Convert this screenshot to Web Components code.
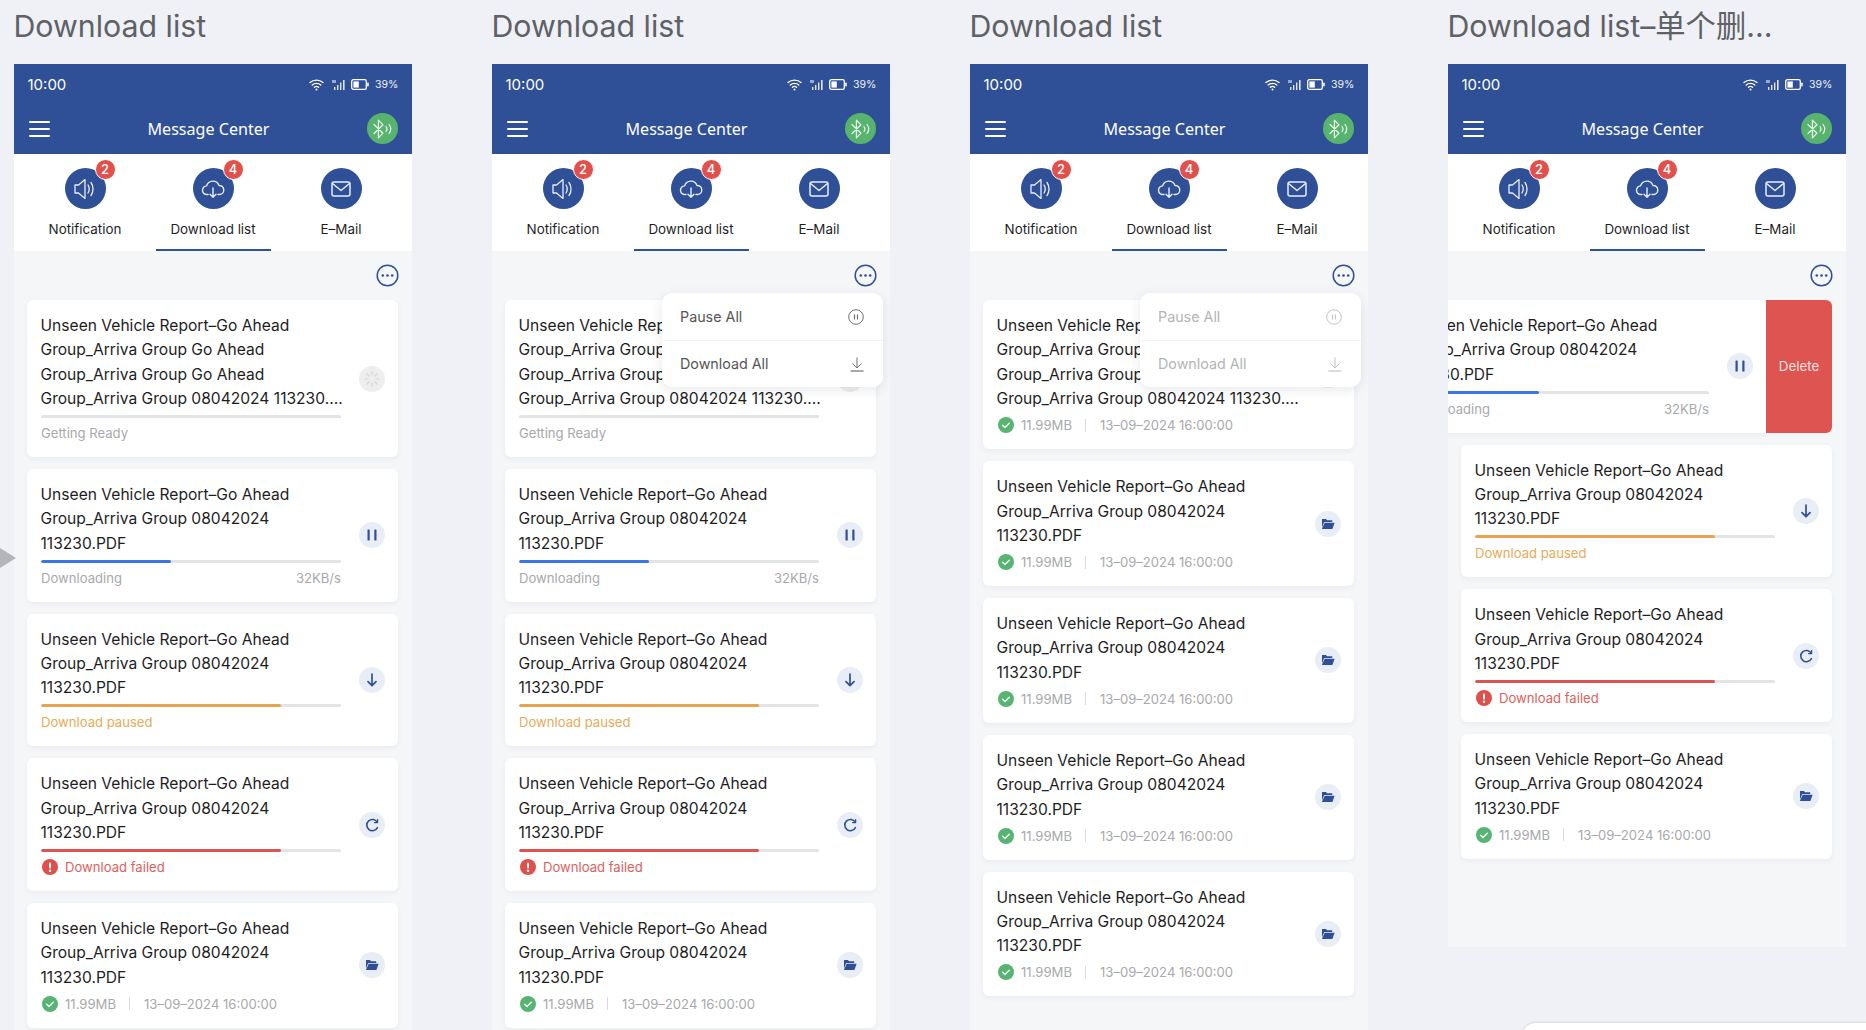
<!DOCTYPE html>
<html lang="en"><head><meta charset="utf-8"><title>Download list</title>
<style>
html,body{margin:0;height:100%;overflow:hidden;background:#eff1f6}
body{font-family:Inter,"Noto Sans CJK SC",sans-serif;}
</style></head><body>
<dl-board>
  <dl-column heading="Download list">
    <dl-phone>
      <dl-card icon="spin" state="ready">Unseen Vehicle Report–Go Ahead<br>Group_Arriva Group Go Ahead<br>Group_Arriva Group Go Ahead<br>Group_Arriva Group 08042024 113230....</dl-card>
      <dl-card icon="pause" state="loading">Unseen Vehicle Report–Go Ahead<br>Group_Arriva Group 08042024<br>113230.PDF</dl-card>
      <dl-card icon="down" state="paused">Unseen Vehicle Report–Go Ahead<br>Group_Arriva Group 08042024<br>113230.PDF</dl-card>
      <dl-card icon="retry" state="failed">Unseen Vehicle Report–Go Ahead<br>Group_Arriva Group 08042024<br>113230.PDF</dl-card>
      <dl-card icon="folder" state="done">Unseen Vehicle Report–Go Ahead<br>Group_Arriva Group 08042024<br>113230.PDF</dl-card>
    </dl-phone>
  </dl-column>
  <dl-column heading="Download list">
    <dl-phone>
      <dl-menu slot="overlay"></dl-menu>
      <dl-card icon="spin" state="ready">Unseen Vehicle Report–Go Ahead<br>Group_Arriva Group Go Ahead<br>Group_Arriva Group Go Ahead<br>Group_Arriva Group 08042024 113230....</dl-card>
      <dl-card icon="pause" state="loading">Unseen Vehicle Report–Go Ahead<br>Group_Arriva Group 08042024<br>113230.PDF</dl-card>
      <dl-card icon="down" state="paused">Unseen Vehicle Report–Go Ahead<br>Group_Arriva Group 08042024<br>113230.PDF</dl-card>
      <dl-card icon="retry" state="failed">Unseen Vehicle Report–Go Ahead<br>Group_Arriva Group 08042024<br>113230.PDF</dl-card>
      <dl-card icon="folder" state="done">Unseen Vehicle Report–Go Ahead<br>Group_Arriva Group 08042024<br>113230.PDF</dl-card>
    </dl-phone>
  </dl-column>
  <dl-column heading="Download list">
    <dl-phone>
      <dl-menu slot="overlay" disabled></dl-menu>
      <dl-card icon="folder" state="done">Unseen Vehicle Report–Go Ahead<br>Group_Arriva Group Go Ahead<br>Group_Arriva Group Go Ahead<br>Group_Arriva Group 08042024 113230....</dl-card>
      <dl-card icon="folder" state="done">Unseen Vehicle Report–Go Ahead<br>Group_Arriva Group 08042024<br>113230.PDF</dl-card>
      <dl-card icon="folder" state="done">Unseen Vehicle Report–Go Ahead<br>Group_Arriva Group 08042024<br>113230.PDF</dl-card>
      <dl-card icon="folder" state="done">Unseen Vehicle Report–Go Ahead<br>Group_Arriva Group 08042024<br>113230.PDF</dl-card>
      <dl-card icon="folder" state="done">Unseen Vehicle Report–Go Ahead<br>Group_Arriva Group 08042024<br>113230.PDF</dl-card>
    </dl-phone>
  </dl-column>
  <dl-column heading="Download list–单个删...">
    <dl-phone short>
      <dl-swipe><dl-card icon="pause" state="loading">Unseen Vehicle Report–Go Ahead<br>Group_Arriva Group 08042024<br>113230.PDF</dl-card></dl-swipe>
      <dl-card icon="down" state="paused">Unseen Vehicle Report–Go Ahead<br>Group_Arriva Group 08042024<br>113230.PDF</dl-card>
      <dl-card icon="retry" state="failed">Unseen Vehicle Report–Go Ahead<br>Group_Arriva Group 08042024<br>113230.PDF</dl-card>
      <dl-card icon="folder" state="done">Unseen Vehicle Report–Go Ahead<br>Group_Arriva Group 08042024<br>113230.PDF</dl-card>
    </dl-phone>
  </dl-column>
</dl-board>
<script>
const BLUE='#2f5096';
const ICONS={
 spin:`<svg width="16" height="16" viewBox="0 0 16 16" fill="none" stroke="#d4d4d4" stroke-width="1.2" stroke-linecap="round"><path d="M8 1v3M8 12v3M1 8h3M12 8h3M3 3l2 2M11 11l2 2M3 13l2-2M11 5l2-2"/></svg>`,
 pause:`<svg width="12" height="12" viewBox="0 0 12 12" fill="${BLUE}"><rect x="1.5" y="0.5" width="2.2" height="11" rx=".6"/><rect x="8.3" y="0.5" width="2.2" height="11" rx=".6"/></svg>`,
 down:`<svg width="14" height="14" viewBox="0 0 14 14" fill="none" stroke="${BLUE}" stroke-width="1.7" stroke-linecap="round" stroke-linejoin="round"><path d="M7 1v11.4M3 8.6l4 4 4-4"/></svg>`,
 retry:`<svg width="14" height="14" viewBox="0 0 14 14" fill="none" stroke="${BLUE}" stroke-width="1.6" stroke-linecap="round"><path d="M12.2 4.2A5.6 5.6 0 1 0 12.4 9.6"/><path d="M12.6 1.6v3h-3" stroke-width="1.3" stroke-linejoin="round"/></svg>`,
 folder:`<svg width="14" height="12" viewBox="0 0 14 12" fill="${BLUE}"><path d="M1 1h4l1 1.3h5.2V4H3.2L1 9.5z"/><path d="M3.7 4.8H13.6L11.4 11H.9z"/></svg>`
};
function def(name,css,html,init){
  customElements.define(name,class extends HTMLElement{
    constructor(){super();this.attachShadow({mode:'open'});}
    connectedCallback(){
      this.shadowRoot.innerHTML=`<style>${css}</style>`+(typeof html==='function'?html(this):html);
      if(init)init(this);
    }
  });
}
def('dl-board',`:host{display:flex;gap:80px;padding-left:14px;height:1030px;overflow:hidden;position:relative;box-sizing:border-box}
 .arrow{position:absolute;left:0;top:548px;width:0;height:0;border-left:16px solid #b3b5b9;border-top:10px solid transparent;border-bottom:10px solid transparent;z-index:3}
 .sheet{position:absolute;left:1522px;top:1023px;width:344px;height:20px;background:#fff;border-radius:14px 0 0 0;box-shadow:0 -1px 2px rgba(0,0,0,.1)}`,
 `<slot></slot><div class="arrow"></div><div class="sheet"></div>`);
def('dl-column',`:host{display:flex;flex-direction:column;flex:0 0 398px;width:398px;min-width:0}
 h1{margin:0 0 0 -.5px;height:63.5px;font:400 30.3px/52px Inter,"Noto Sans CJK SC",sans-serif;color:#5e6165;white-space:nowrap;flex:none}`,
 h=>`<h1>${h.getAttribute('heading')}</h1><slot></slot>`);
def('dl-phone',`:host{display:block;position:relative;overflow:hidden;background:#f5f6f8;flex:none}
 :host(:not([short])){height:1000px}
 :host([short]){height:883.5px}
 .list{display:flex;flex-direction:column;gap:12px;padding:0 14px 0 13px}`,
 `<dl-statusbar></dl-statusbar><dl-nav></dl-nav><dl-tabs></dl-tabs><dl-tools></dl-tools><div class="list"><slot></slot></div><slot name="overlay"></slot>`);
def('dl-statusbar',`:host{display:flex;align-items:center;height:41.5px;padding:1px 15px 0 13.5px;background:${BLUE};color:#fff;box-sizing:border-box}
 .t{font:400 15px/1 Inter,sans-serif;flex:1}
 svg{display:block}
 .p{font:400 10.5px/1 Inter,sans-serif;margin-left:6px;color:#eef1f8;width:22px;white-space:nowrap}`,
 `<span class="t">10:00</span>
 <svg width="15" height="12" viewBox="0 0 15 12" fill="none" stroke="#fff" stroke-width="1.3" stroke-linecap="round"><path d="M1 3.6C4.6.4 10.4.4 14 3.6M3.2 6C5.6 3.9 9.4 3.9 11.8 6M5.4 8.3c1.2-1 3-1 4.2 0"/><circle cx="7.5" cy="10.6" r="1" fill="#fff" stroke="none"/></svg>
 <svg style="margin-left:8px" width="15" height="12" viewBox="0 0 15 12" fill="#dfe5f2"><rect x="2" y="8" width="1.4" height="3"/><rect x="5" y="6" width="1.4" height="5"/><rect x="8" y="3.5" width="1.4" height="7.5"/><rect x="11" y="1" width="1.6" height="10"/><rect x="0" y="1" width="4" height="3" opacity=".6"/></svg>
 <svg style="margin-left:4.5px" width="18" height="11" viewBox="0 0 18 11" fill="none"><rect x=".7" y=".7" width="14.6" height="9.6" rx="1.6" stroke="#fff" stroke-width="1.3"/><rect x="2.4" y="2.4" width="5.4" height="6.2" fill="#fff"/><rect x="16.2" y="3.6" width="1.5" height="3.8" rx=".6" fill="#fff"/></svg>
 <span class="p">39%</span>`);
def('dl-nav',`:host{display:flex;align-items:center;height:49px;padding:0 14px 1.5px 15px;background:${BLUE};color:#fff;box-sizing:border-box}
 .m{flex:none;width:21px;height:16px;display:flex;flex-direction:column;justify-content:space-between}
 .m i{display:block;height:2px;background:#fff;border-radius:1px}
 .c{flex:1;text-align:center;font:400 16.1px/1 "Noto Sans",sans-serif;padding-left:0}
 .b{flex:none;width:31px;height:31px;border-radius:50%;background:#58b36f;display:flex;align-items:center;justify-content:center}`,
 `<div class="m"><i></i><i></i><i></i></div><div class="c">Message Center</div>
 <div class="b"><svg width="23" height="20" viewBox="0 0 23 20" fill="none" stroke="#e9f6ec" stroke-width="1.2" stroke-linejoin="round" stroke-linecap="round"><path d="M3 5.5l9 8.7-4.6 4.6V1.2l4.6 4.6-9 8.7"/><path d="M15 7.5c1.2 1.5 1.2 3.5 0 5M18 5.5c2.1 2.7 2.1 6.3 0 9"/></svg></div>`);
def('dl-tabs',`:host{display:grid;grid-template-columns:repeat(3,128px);padding:0 7px;height:97px;background:#fff;box-sizing:border-box}`,
 `<dl-tab label="Notification" badge="2" icon="sound"></dl-tab><dl-tab label="Download list" badge="4" icon="cloud" active></dl-tab><dl-tab label="E–Mail" icon="mail"></dl-tab>`);
const TAB={
 sound:`<svg width="24" height="22" viewBox="0 0 24 22" fill="none" stroke="#e8edf7" stroke-width="1.3" stroke-linejoin="round" stroke-linecap="round"><path d="M2 7h3.5L12 1.6v18.8L5.5 15H2z"/><path d="M15 7c1.5 2.4 1.5 5.6 0 8M18 4.500c2.700 3.800 2.700 9.200 0 13"/></svg>`,
 cloud:`<svg width="24" height="20" viewBox="0 0 24 20" fill="none" stroke="#e8edf7" stroke-width="1.4" stroke-linejoin="round" stroke-linecap="round"><path d="M7 15.5H6a4.3 4.3 0 0 1-.4-8.6A6.5 6.5 0 0 1 18 6.500a4.500 4.500 0 0 1 .5 9H17"/><path d="M12 9v9M9 15.200l3 3 3-3"/></svg>`,
 mail:`<svg width="22" height="18" viewBox="0 0 22 18" fill="none" stroke="#e8edf7" stroke-width="1.5" stroke-linejoin="round" stroke-linecap="round"><rect x="2" y="2" width="18" height="14" rx="2"/><path d="M2.500 3.500L11 10.500l8.500-7"/></svg>`
};
def('dl-tab',`:host{display:flex;flex-direction:column;align-items:center;position:relative}
 .c{margin-top:14px;width:41px;height:41px;border-radius:50%;background:${BLUE};display:flex;align-items:center;justify-content:center;position:relative;flex:none}
 .n{position:absolute;left:30px;top:-9px;width:19px;height:19px;border:1px solid #fff;border-radius:50%;background:#e2504c;color:#fff;font:500 13px/19px Inter,sans-serif;text-align:center}
 .l{margin-top:9.500px;font:400 13.400px/20px Inter,sans-serif;color:#1f1f1f;white-space:nowrap}
 .u{position:absolute;left:6.500px;bottom:0;width:115px;height:2px;background:${BLUE}}`,
 h=>`<div class="c">${TAB[h.getAttribute('icon')]}${h.getAttribute('badge')?`<div class="n">${h.getAttribute('badge')}</div>`:''}</div><div class="l">${h.getAttribute('label')}</div>${h.hasAttribute('active')?'<div class="u"></div>':''}`);
def('dl-tools',`:host{display:flex;justify-content:flex-end;align-items:center;height:49px;padding-right:13.500px}`,
 `<svg width="23" height="23" viewBox="0 0 23 23" fill="none"><circle cx="11.500" cy="11.500" r="10.300" stroke="${BLUE}" stroke-width="1.500"/><circle cx="6.800" cy="11.500" r="1.300" fill="${BLUE}"/><circle cx="11.500" cy="11.500" r="1.300" fill="${BLUE}"/><circle cx="16.200" cy="11.500" r="1.300" fill="${BLUE}"/></svg>`);
def('dl-card',`:host{display:flex;align-items:center;flex:none;width:371px;box-sizing:border-box;padding:14px 12px 14px 14px;background:#fff;border-radius:6px;box-shadow:0 2px 5px rgba(30,40,60,.05);font-family:Inter,sans-serif}
 .main{width:300px;flex:none}
 .title{font:400 15.600px/24.400px Inter,sans-serif;color:#1e1e1e;white-space:nowrap;margin-left:-.5px}
 .bar{margin-top:3.400px;height:3px;border-radius:2px;background:#e3e4e6;overflow:hidden}
 .bar i{display:block;height:100%;border-radius:2px}
 .row{display:flex;align-items:center;justify-content:space-between;margin-top:5px;height:20px;font:400 13.100px/20px Inter,sans-serif;color:#a8a9ab;white-space:nowrap}
 .row.meta{margin-top:3.600px}
 .gap{justify-content:flex-start}
 .ic{flex:none;margin-left:.5px;margin-right:7.500px;display:block}
 .sep{width:1px;height:13px;background:#d9d9d9;margin:0 13.500px}
 .act{flex:none;margin-left:18px;width:26px;height:26px;border-radius:50%;background:#e9edf5;display:flex;align-items:center;justify-content:center}
 .act.sp{background:#eeeeee}`,
 h=>{
  const s=h.getAttribute('state');let st='';
  const bar=(w,c)=>`<div class="bar"><i style="width:${w}%;background:${c}"></i></div>`;
  if(s==='ready')st=bar(0,'#ccc')+`<div class="row"><span>Getting Ready</span></div>`;
  if(s==='loading')st=bar(43.400,'#3a76e6')+`<div class="row"><span>Downloading</span><span>32KB/s</span></div>`;
  if(s==='paused')st=bar(80,'#e6a452')+`<div class="row" style="color:#e8aa58"><span>Download paused</span></div>`;
  if(s==='failed')st=bar(80,'#dd5350')+`<div class="row gap" style="color:#e0605c"><svg class="ic" width="16" height="16" viewBox="0 0 16 16"><circle cx="8" cy="8" r="8" fill="#df4f4b"/><rect x="7" y="3.400" width="2" height="6.200" rx="1" fill="#fff"/><circle cx="8" cy="11.700" r="1.200" fill="#fff"/></svg><span>Download failed</span></div>`;
  if(s==='done')st=`<div class="row gap meta"><svg class="ic" width="16" height="16" viewBox="0 0 16 16"><circle cx="8" cy="8" r="8" fill="#57b472"/><path d="M4.600 8.200l2.400 2.300 4.300-4.300" fill="none" stroke="#fff" stroke-width="1.300" stroke-linecap="round" stroke-linejoin="round"/></svg><span>11.99MB</span><i class="sep"></i><span>13–09–2024 16:00:00</span></div>`;
  const ic=h.getAttribute('icon');
  return `<div class="main"><div class="title"><slot></slot></div>${st}</div><div class="act ${ic==='spin'?'sp':''}">${ICONS[ic]}</div>`;
 });
def('dl-swipe',`:host{display:flex;align-items:stretch;margin-left:-66px;width:437px;flex:none}
 .del{flex:0 0 66px;background:#dd5450;border-radius:0 6px 6px 0;color:#f7e3e2;font:400 13.300px/1 Inter,sans-serif;display:flex;align-items:center;justify-content:center;box-sizing:border-box}`,
 `<slot></slot><div class="del">Delete</div>`,
 h=>{const c=h.querySelector('dl-card');c.style.borderRadius='0';});
def('dl-menu',`:host{position:absolute;left:170px;top:229.500px;width:221px;height:94px;background:#fff;border-radius:10px;box-shadow:0 3px 12px rgba(30,40,60,.10);display:flex;flex-direction:column;color:#555;font:400 14.300px/1 Inter,sans-serif;z-index:2}
 :host([disabled]){color:#b4b4b4}
 .i{flex:1;display:flex;align-items:center;justify-content:space-between;padding:1.500px 19px 0 18px;box-sizing:border-box}
 .i+.i{border-top:1.500px solid #f2f2f4}`,
 h=>{const c=h.hasAttribute('disabled')?'#c4c4c4':'#707070';
 return `<div class="i"><span>Pause All</span><svg width="16" height="16" viewBox="0 0 16 16" fill="none" stroke="${c}" stroke-width="1"><circle cx="8" cy="8" r="7.300"/><path d="M6.500 5.500v5M9.500 5.500v5" stroke-width="1.200"/></svg></div>
 <div class="i"><span>Download All</span><svg width="14" height="15" viewBox="0 0 14 15" fill="none" stroke="${c}" stroke-width="1"><path d="M7 .5v10M2.500 6.500L7 11l4.500-4.500"/><path d="M.500 14h13" stroke-width="1.200"/></svg></div>`;});
</script>
</body></html>
